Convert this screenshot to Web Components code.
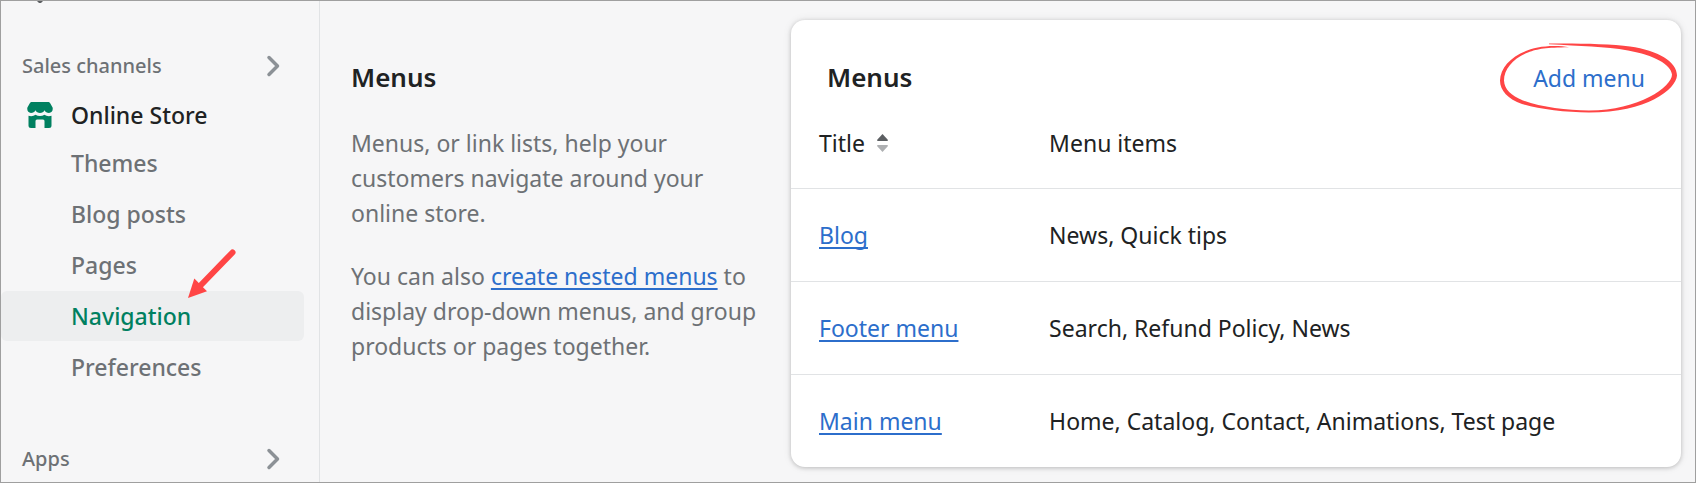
<!DOCTYPE html>
<html lang="en">
<head>
<meta charset="utf-8">
<title>Navigation</title>
<style>
  html { background: #f6f6f7; }
  body {
    margin: 0;
    font: 400 23px/35px "Noto Sans", "Open Sans", sans-serif;
    color: #202223;
    --subdued: #6d7175;
    --link: #2c6ecb;
    --brand: #008060;
    --line: #e1e3e5;
    --mark: #ff4545;
  }
</style>
</head>
<body>
<admin-page>
  <side-nav slot="nav">
    <nav-section label="Sales channels">
      <nav-channel>Online Store</nav-channel>
      <nav-item>Themes</nav-item>
      <nav-item>Blog posts</nav-item>
      <nav-item>Pages</nav-item>
      <nav-item current>Navigation<mark-arrow slot="mark"></mark-arrow></nav-item>
      <nav-item>Preferences</nav-item>
    </nav-section>
    <nav-section label="Apps"></nav-section>
  </side-nav>
  <section-intro></section-intro>
  <menus-card></menus-card>
</admin-page>

<script>
function define(name, markup, setup) {
  const template = document.createElement('template');
  template.innerHTML = markup;
  customElements.define(name, class extends HTMLElement {
    constructor() {
      super();
      this.attachShadow({ mode: 'open' }).append(template.content.cloneNode(true));
    }
    connectedCallback() { if (setup) setup(this, this.shadowRoot); }
  });
}

define('admin-page', `
  <style>
    :host { display: flex; box-sizing: border-box; min-height: 100vh; border: 1px solid #9f9f9f; background: #f6f6f7; }
    main { flex: 1; display: grid; grid-template-columns: 410fr 890fr; align-items: start; gap: 30px; padding: 19px 14px 14px 31px; }
  </style>
  <slot name="nav"></slot>
  <main><slot></slot></main>`);

define('side-nav', `
  <style>
    :host { display: block; flex: none; box-sizing: border-box; width: 319px; border-right: 1px solid var(--line); }
    nav { display: flex; flex-direction: column; gap: 49px; }
    .prev { display: block; height: 47px; padding-left: 26px; box-sizing: border-box; margin-bottom: -49px; }
    .prev svg { display: block; }
  </style>
  <nav aria-label="Main">
    <div class="prev"><svg width="26" height="2" aria-hidden="true"><path d="M10 0h6l-2 2h-2z" fill="#5c5f62"/></svg></div>
    <slot></slot>
  </nav>`);

define('nav-section', `
  <style>
    :host { display: block; }
    button {
      display: flex; align-items: center; justify-content: space-between;
      width: 100%; height: 36px; padding: 0 38px 0 21px; border: 0; background: none;
      font: 500 20px/36px "Noto Sans", "Open Sans", sans-serif; color: var(--subdued); text-align: left;
    }
    svg { display: block; }
    .items { display: flex; flex-direction: column; gap: 1px; }
  </style>
  <button type="button"><span></span>
    <svg width="15" height="22" viewBox="0 0 15 22" aria-hidden="true"><path d="M3 2.500l8.500 8.500L3 19.500" fill="none" stroke="#8c9196" stroke-width="3.500" stroke-linecap="round" stroke-linejoin="round"/></svg>
  </button>
  <div class="items"><slot></slot></div>`,
  (host, root) => { root.querySelector('span').textContent = host.getAttribute('label'); });

define('nav-channel', `
  <style>
    :host { display: block; margin-top: 9px; }
    a { display: flex; align-items: center; gap: 18px; height: 44px; padding-left: 26px; font-weight: 500; color: #202223; text-decoration: none; }
    svg { display: block; }
  </style>
  <a href="#">
    <svg width="26" height="26" viewBox="0 0 26 26" fill="var(--brand)" aria-hidden="true">
      <path d="M5 0H21C22 0 22.700.400 23.200 1.300L25.600 5.500C26.300 8.500 24.600 11 22 11C20 11 18.400 10 17.500 8.200C16.700 10 15 11 13 11C11 11 9.300 10 8.500 8.200C7.600 10 6 11 4 11C1.400 11-.300 8.500.400 5.500L2.800 1.300C3.300.400 4 0 5 0Z"/>
      <path d="M1.500 13.800C4.500 14.600 6.800 14 8.500 12.800C11.200 14.400 14.800 14.400 17.500 12.800C19.200 14 21.500 14.600 24.500 13.800V23.500Q24.500 26 22 26H17.500V19Q17.500 17.500 16 17.500H10Q8.500 17.500 8.500 19V26H4Q1.500 26 1.500 23.500Z"/>
    </svg>
    <span><slot></slot></span>
  </a>`);

define('nav-item', `
  <style>
    :host { display: block; position: relative; margin-right: 15px; }
    a { display: block; padding-left: 70px; border-radius: 6px; font-weight: 500; line-height: 50px; color: var(--subdued); text-decoration: none; }
    :host([current]) a { background: #edeeef; color: var(--brand); }
  </style>
  <a href="#"><slot></slot></a><slot name="mark"></slot>`,
  (host, root) => { if (host.hasAttribute('current')) root.querySelector('a').setAttribute('aria-current', 'page'); });

define('mark-arrow', `
  <style>
    :host { position: absolute; left: 187px; bottom: 42px; pointer-events: none; }
    svg { display: block; }
  </style>
  <svg width="48" height="50" viewBox="0 0 48 50" aria-hidden="true">
    <path d="M44.500 3.500L12 37" stroke="var(--mark)" stroke-width="6" stroke-linecap="round"/>
    <path d="M0 49L6.300 29.500L19 42.300Z" fill="var(--mark)"/>
  </svg>`);

define('section-intro', `
  <style>
    :host { display: block; padding-top: 39px; }
    h2 { margin: 0 0 31px; font-size: 26px; line-height: 36px; font-weight: 600; }
    p { margin: 0 0 28px; color: var(--subdued); }
    p:last-child { margin: 0; }
    a { color: var(--link); text-decoration-thickness: 2px; text-underline-offset: 3px; text-decoration-skip-ink: none; }
  </style>
  <h2>Menus</h2>
  <p>Menus, or link lists, help your customers navigate around your online store.</p>
  <p>You can also <a href="#">create nested menus</a> to display drop-down menus, and group products or pages together.</p>`);

define('mark-circle', `
  <style>
    :host { position: absolute; left: 50%; top: 50%; transform: translate(-50%, -50%); pointer-events: none; }
    svg { display: block; }
  </style>
  <svg width="178" height="70" viewBox="50 42.500 178 70" aria-hidden="true">
    <path fill="var(--mark)" d="M99 43C122 42.700 160 43 180 46C208 50 227 61 227 75C226 89 197 112 139 112C115 112 88 108.500 72 103.500C58 98.500 50 90 50 80C50.500 62 72 45.500 104 45.500C110 45.500 115 46 119 46.800C96 47 88 48.300 78 52C63 58 54 69 54 80C54.500 89 61 95 73 100C90 106.500 117 110 139 110C189 110 222 86 222 74C221 64 204 54.500 178 50C155 46 130 45.500 99 43.800Z"/>
  </svg>`);

define('menus-card', `
  <style>
    :host { display: block; border-radius: 14px; background: #fff; box-shadow: 0 1px 4px rgba(0,0,0,.2), 0 0 10px rgba(0,0,0,.08); }
    header { display: flex; align-items: baseline; justify-content: space-between; padding: 39px 36px 2px; line-height: 36px; }
    h2 { margin: 0; font-size: 26px; font-weight: 600; }
    .action { position: relative; }
    .action button { display: block; padding: 0; border: 0; background: none; font: inherit; color: var(--link); }
    table { width: 100%; table-layout: fixed; border-collapse: separate; border-spacing: 0; }
    th, td { box-sizing: border-box; height: 93px; padding: 0; border-top: 1px solid var(--line); font-weight: 400; text-align: left; vertical-align: middle; }
    thead th { height: 90px; border-top: 0; }
    tr > :first-child { width: 29%; padding-left: 28px; }
    a { color: var(--link); text-decoration-thickness: 2px; text-underline-offset: 3px; text-decoration-skip-ink: none; }
    .sort { display: flex; align-items: center; gap: 12px; padding: 0; border: 0; background: none; font: inherit; color: inherit; }
    svg { display: block; }
  </style>
  <header>
    <h2>Menus</h2>
    <div class="action"><button type="button">Add menu</button><mark-circle></mark-circle></div>
  </header>
  <table>
    <thead><tr>
      <th scope="col" aria-sort="ascending"><button class="sort" type="button">Title
        <svg width="11" height="18" viewBox="0 0 11 18" aria-hidden="true"><path d="M5.500 0L11 6Q11 7 10 7H1Q0 7 0 6Z" fill="#5c5f62"/><path d="M5.500 18L11 12Q11 11 10 11H1Q0 11 0 12Z" fill="#aeb0b2"/></svg></button></th>
      <th scope="col">Menu items</th>
    </tr></thead>
    <tbody>
      <tr><td><a href="#">Blog</a></td><td>News, Quick tips</td></tr>
      <tr><td><a href="#">Footer menu</a></td><td>Search, Refund Policy, News</td></tr>
      <tr><td><a href="#">Main menu</a></td><td>Home, Catalog, Contact, Animations, Test page</td></tr>
    </tbody>
  </table>`);
</script>
</body>
</html>
